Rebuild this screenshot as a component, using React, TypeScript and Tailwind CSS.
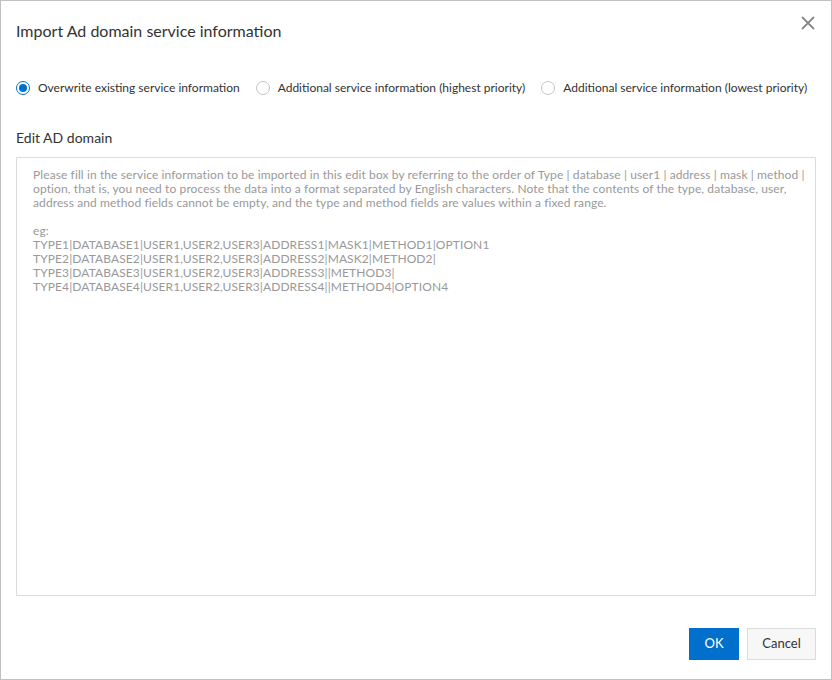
import { useState } from 'react';

const placeholder = [
  'Please fill in the service information to be imported in this edit box by referring to the order of Type | database | user1 | address | mask | method |',
  'option, that is, you need to process the data into a format separated by English characters. Note that the contents of the type, database, user,',
  'address and method fields cannot be empty, and the type and method fields are values within a fixed range.',
  '',
  'eg:',
  'TYPE1|DATABASE1|USER1,USER2,USER3|ADDRESS1|MASK1|METHOD1|OPTION1',
  'TYPE2|DATABASE2|USER1,USER2,USER3|ADDRESS2|MASK2|METHOD2|',
  'TYPE3|DATABASE3|USER1,USER2,USER3|ADDRESS3||METHOD3|',
  'TYPE4|DATABASE4|USER1,USER2,USER3|ADDRESS4||METHOD4|OPTION4',
].join('\n');

const modes = [
  { id: 'overwrite', label: 'Overwrite existing service information' },
  { id: 'highest', label: 'Additional service information (highest priority)' },
  { id: 'lowest', label: 'Additional service information (lowest priority)' },
];

function Radio({ checked, label, onClick }: { checked: boolean; label: string; onClick: () => void }) {
  return (
    <label className="flex cursor-pointer items-center gap-2 whitespace-nowrap" onClick={onClick}>
      <span
        className={
          checked
            ? 'flex h-[14px] w-[14px] shrink-0 items-center justify-center rounded-full border border-[#0070cc] bg-white'
            : 'flex h-[14px] w-[14px] shrink-0 items-center justify-center rounded-full border border-[#c4c4c4] bg-white'
        }
      >
        {checked && <span className="h-[8px] w-[8px] rounded-full bg-[#0070cc]" />}
      </span>
      <span className="text-[12px] leading-[16px] text-[#333]">{label}</span>
    </label>
  );
}

export default function App() {
  const [mode, setMode] = useState('overwrite');
  const [value, setValue] = useState('');

  return (
    <div
      className="flex h-[680px] w-[832px] flex-col border border-[#c0c0c0] bg-white"
      style={{ fontFamily: '"Segoe UI", Lato, sans-serif' }}
    >
      {/* header */}
      <div className="flex items-start justify-between pl-[15px] pr-[15px] pt-[19px]">
        <h2 className="text-[16px] leading-[22px] text-[#333]">Import Ad domain service information</h2>
        <button className="-mt-[5px] text-[#888]" aria-label="Close">
          <svg width="16" height="16" viewBox="0 0 16 16" fill="none" stroke="currentColor" strokeWidth="1.8">
            <path d="M2 2L14 14M14 2L2 14" />
          </svg>
        </button>
      </div>

      {/* body */}
      <div className="flex flex-1 flex-col px-[15px] pt-[38px]">
        <div className="flex items-center gap-4">
          {modes.map((m) => (
            <Radio key={m.id} checked={mode === m.id} label={m.label} onClick={() => setMode(m.id)} />
          ))}
        </div>

        <div className="mt-[32px] text-[14px] leading-[20px] text-[#333]">Edit AD domain</div>

        <textarea
          wrap="off"
          value={value}
          onChange={(e) => setValue(e.target.value)}
          placeholder={placeholder}
          className="mt-[9px] h-[439px] w-full resize-none overflow-hidden border border-[#dcdcdc] px-[16px] py-[10px] text-[12px] leading-[14px] tracking-[0.1px] text-[#333] outline-none placeholder:text-[#999]"
        />
      </div>

      {/* footer */}
      <div className="flex justify-end gap-2 px-[15px] pb-[19px]">
        <button className="h-[32px] w-[50px] bg-[#0070cc] text-[13px] text-white">OK</button>
        <button className="h-[32px] w-[69px] border border-[#dcdcdc] bg-[#f7f7f7] text-[13px] text-[#333]">
          Cancel
        </button>
      </div>
    </div>
  );
}
